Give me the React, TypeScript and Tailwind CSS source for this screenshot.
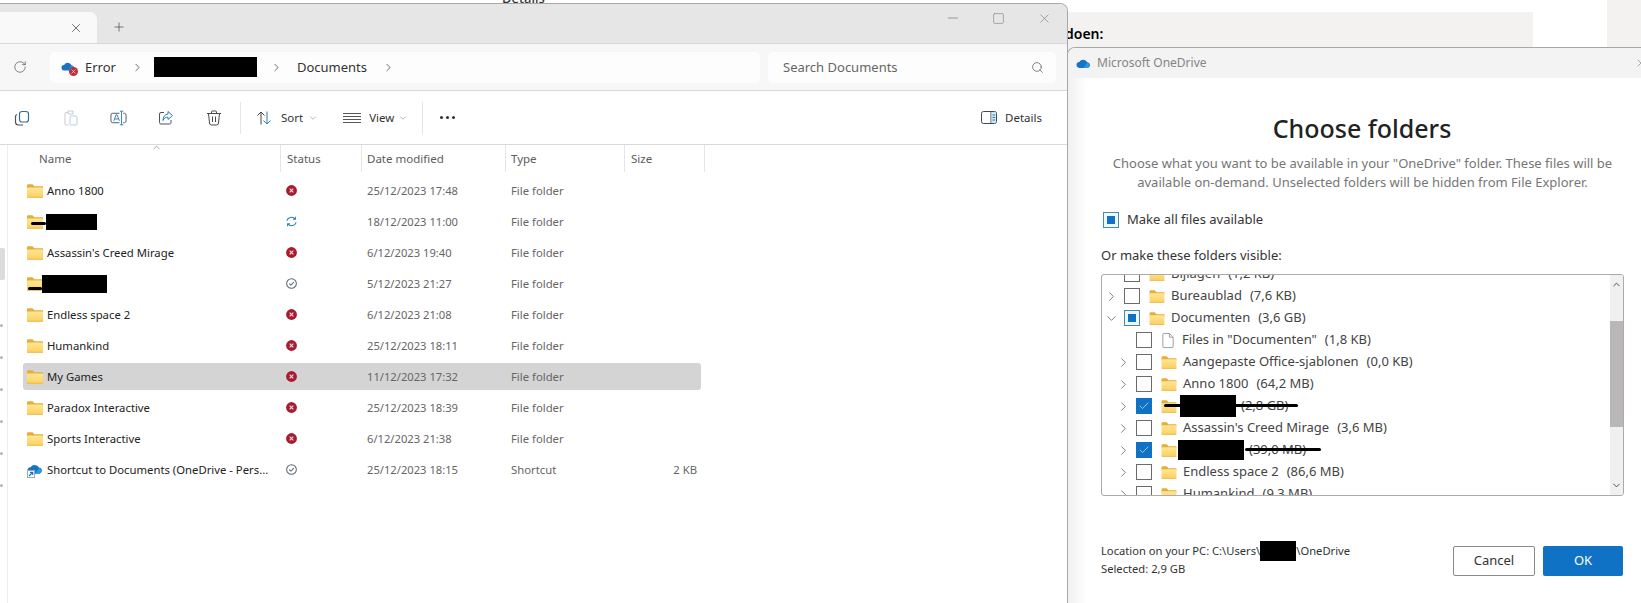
import { ChevronRight, ChevronDown, ChevronUp, Plus, X, Minus, Square, Search, RotateCw, Check } from "lucide-react";

const FONT = "font-['Noto_Sans',sans-serif]";

const files = [
  { name: "Anno 1800", status: "error", date: "25/12/2023 17:48", type: "File folder" },
  { name: "", hidden: 51, hiddenH: 16, hiddenGap: 3, lineLeft: 8, lineTop: 8, lineW: 15, status: "sync", date: "18/12/2023 11:00", type: "File folder" },
  { name: "Assassin's Creed Mirage", status: "error", date: "6/12/2023 19:40", type: "File folder" },
  { name: "", hidden: 65, hiddenH: 18, hiddenGap: -1, lineLeft: 5, lineTop: 12, lineW: 14, status: "ok", date: "5/12/2023 21:27", type: "File folder" },
  { name: "Endless space 2", status: "error", date: "6/12/2023 21:08", type: "File folder" },
  { name: "Humankind", status: "error", date: "25/12/2023 18:11", type: "File folder" },
  { name: "My Games", status: "error", date: "11/12/2023 17:32", type: "File folder", selected: true },
  { name: "Paradox Interactive", status: "error", date: "25/12/2023 18:39", type: "File folder" },
  { name: "Sports Interactive", status: "error", date: "6/12/2023 21:38", type: "File folder" },
  { name: "Shortcut to Documents (OneDrive - Pers...", status: "ok", date: "25/12/2023 18:15", type: "Shortcut", size: "2 KB", shortcut: true },
];

const tree = [
  { level: 1, name: "Bijlagen", size: "(1,2 KB)" },
  { level: 1, name: "Bureaublad", size: "(7,6 KB)", arrow: "right" },
  { level: 1, name: "Documenten", size: "(3,6 GB)", arrow: "down", state: "mixed" },
  { level: 2, name: 'Files in "Documenten"', size: "(1,8 KB)", file: true },
  { level: 2, name: "Aangepaste Office-sjablonen", size: "(0,0 KB)", arrow: "right" },
  { level: 2, name: "Anno 1800", size: "(64,2 MB)", arrow: "right" },
  { level: 2, redact: 56, redactGap: 3, redactH: 22, size: "(2,8 GB)", arrow: "right", state: "checked", strikeLeft: 62, strikeW: 134 },
  { level: 2, name: "Assassin's Creed Mirage", size: "(3,6 MB)", arrow: "right" },
  { level: 2, redact: 66, redactGap: 1, redactH: 20, size: "(39,0 MB)", arrow: "right", state: "checked", strikeLeft: 143, strikeW: 76 },
  { level: 2, name: "Endless space 2", size: "(86,6 MB)", arrow: "right" },
  { level: 2, name: "Humankind", size: "(9,3 MB)", arrow: "right" },
];

const FolderIcon = ({ className = "" }: { className?: string }) => (
  <svg viewBox="0 0 16 14" className={className}>
    <defs>
      <linearGradient id="folderBody" x1="0" y1="0" x2="0" y2="1">
        <stop offset="0" stopColor="#ffe694" />
        <stop offset="1" stopColor="#fbd05f" />
      </linearGradient>
    </defs>
    <path d="M0 1.500C0 .8.5.3 1.200.3h4.300l2 2H16V5H0z" fill="#e5ae3a" />
    <rect x="0" y="3.400" width="16" height="10.300" rx="1" fill="url(#folderBody)" />
    <rect x="0" y="12.800" width="16" height=".9" fill="#ebb84e" />
  </svg>
);

const ErrorIcon = () => (
  <svg viewBox="0 0 12 12" className="w-[11px] h-[11px]">
    <circle cx="6" cy="6" r="5.900" fill="#a81c2f" />
    <path d="M4 4l4 4M8 4l-4 4" stroke="#f5dfe2" strokeWidth="1.200" />
  </svg>
);

const SyncIcon = () => (
  <svg viewBox="0 0 12 12" fill="none" stroke="#2b82b8" strokeWidth="1.100" className="w-[11px] h-[11px]">
    <path d="M1 5.200A5 4.600 0 0 1 10 3.400M10.300.9v2.700H7.700" />
    <path d="M11 6.800A5 4.600 0 0 1 2 8.600M1.700 11.100V8.400h2.600" />
  </svg>
);

const OkIcon = () => (
  <svg viewBox="0 0 12 12" fill="none" stroke="#566670" className="w-[11px] h-[11px]">
    <circle cx="6" cy="6" r="5.300" strokeWidth="1.100" />
    <path d="M3.600 6.200l1.700 1.600 3.200-3.300" strokeWidth="1.100" />
  </svg>
);

const CloudIcon = ({ className = "" }: { className?: string }) => (
  <svg viewBox="0 0 20 13" className={className}>
    <path d="M5 13a4 4 0 0 1-.6-8A6 6 0 0 1 15 5.400 3.900 3.900 0 0 1 16 13z" fill="#1673c5" />
    <path d="M10 13l5-7a3.900 3.900 0 0 1 1 7z" fill="#2c9be0" />
  </svg>
);

const ShortcutCloud = () => (
  <div className="relative w-[16px] h-[14px] shrink-0">
    <CloudIcon className="w-[16px] h-[11px]" />
    <div className="absolute left-0 bottom-[-1px] w-[8px] h-[8px] bg-white border border-[#9ab] flex items-center justify-center">
      <svg viewBox="0 0 6 6" className="w-[6px] h-[6px]" fill="none" stroke="#1673c5" strokeWidth="1.200">
        <path d="M1 5l3.400-3.400M2 1.300h2.700V4" />
      </svg>
    </div>
  </div>
);

const CopyIcon = () => (
  <svg viewBox="0 0 16 16" fill="none" className="w-[16px] h-[16px]">
    <rect x="5.500" y="1.500" width="9" height="10.500" rx="2.500" stroke="#2f6f94" strokeWidth="1.200" />
    <path d="M3 4.500A2 2 0 0 0 1.500 6.500V12a3 3 0 0 0 3 3H9" stroke="#4a5560" strokeWidth="1.200" />
  </svg>
);

const PasteIcon = () => (
  <svg viewBox="0 0 16 16" fill="none" className="w-[16px] h-[16px]">
    <path d="M5 2.500H3a1 1 0 0 0-1 1v10.500a1 1 0 0 0 1 1h2.500M5 1h5v3H5z" stroke="#c9c9c9" />
    <rect x="7" y="6" width="7" height="9" rx="1" stroke="#b5d0e0" />
  </svg>
);

const RenameIcon = () => (
  <svg viewBox="0 0 18 16" fill="none" className="w-[17px] h-[16px]">
    <path d="M10 3H3a2 2 0 0 0-2 2v6a2 2 0 0 0 2 2h7M14 3h1.500a2 2 0 0 1 1.500 2v6a2 2 0 0 1-1.500 2H14" stroke="#4a5560" />
    <path d="M4 11l2.600-6.500h.8L10 11M5 9h4" stroke="#2a7fb0" />
    <path d="M10.500.8h3.500M12.250.8v14.400M10.500 15.200h3.500" stroke="#2a7fb0" />
  </svg>
);

const ShareIcon = () => (
  <svg viewBox="0 0 16 16" fill="none" className="w-[16px] h-[16px]">
    <path d="M6 2.500H3a1.500 1.500 0 0 0-1.500 1.500v8.500A1.500 1.500 0 0 0 3 14h8.500a1.500 1.500 0 0 0 1.500-1.500V10" stroke="#4a5560" />
    <path d="M10 1.500l4.500 4-4.500 4V7.200C7.500 7.200 6 8.200 5 10.500c0-4 2-6.300 5-6.500z" stroke="#2a7fb0" strokeLinejoin="round" />
  </svg>
);

const TrashIcon = () => (
  <svg viewBox="0 0 16 16" fill="none" stroke="#4a4a4a" className="w-[16px] h-[16px]">
    <path d="M1 3.500h14M5.500 3.500V2a1 1 0 0 1 1-1h3a1 1 0 0 1 1 1v1.500" />
    <path d="M2.500 3.500L3.500 13a2 2 0 0 0 2 2h5a2 2 0 0 0 2-2l1-9.500M6.500 6.500v5.500M9.500 6.500v5.500" />
  </svg>
);

const SortIcon = () => (
  <svg viewBox="0 0 16 16" fill="none" className="w-[16px] h-[16px]">
    <path d="M5 14.500V2M1.500 5.500L5 2l3.500 3.500" stroke="#444" />
    <path d="M11 1.500V14M7.500 10.500L11 14l3.500-3.500" stroke="#2a7fb0" />
  </svg>
);

const ViewIcon = () => (
  <svg viewBox="0 0 18 10" fill="none" stroke="#444" className="w-[18px] h-[10px]">
    <path d="M0 .5h18M0 3.500h18M0 6.500h18M0 9.500h18" strokeWidth=".9" />
  </svg>
);

const DetailsIcon = () => (
  <svg viewBox="0 0 16 13" fill="none" className="w-[16px] h-[13px]">
    <rect x=".5" y=".5" width="15" height="12" rx="2" stroke="#3d4a55" />
    <path d="M10 .5v12" stroke="#3d4a55" />
    <path d="M10.500 1h3.500a1.500 1.500 0 0 1 1 1v9a1.500 1.500 0 0 1-1 1h-3.500z" fill="#cfe6f5" />
    <path d="M11.500 4h2.500M11.500 6.500h2.500M11.500 9h2.500" stroke="#2a7fb0" />
  </svg>
);

const SmallChevron = () => <ChevronDown className="w-[10px] h-[10px] text-[#8a8a8a]" strokeWidth={1.5} />;

const Divider = () => <div className="w-px h-[32px] bg-[#e6e6e6]" />;

const TreeCheck = ({ state }: { state?: string }) => {
  if (state === "checked")
    return (
      <div className="w-[16px] h-[16px] shrink-0 bg-[#0f72c4] flex items-center justify-center">
        <Check className="w-[12px] h-[12px] text-white" strokeWidth={1.2} />
      </div>
    );
  if (state === "mixed")
    return (
      <div className="w-[16px] h-[16px] shrink-0 border border-[#4a8aa8] bg-[#eef7fb] flex items-center justify-center">
        <div className="w-[8px] h-[8px] bg-[#0f72c4]" />
      </div>
    );
  return <div className="w-[16px] h-[16px] shrink-0 border border-[#6b6b6b] bg-white" />;
};

export default function App() {
  return (
    <div className={`relative w-[1641px] h-[603px] overflow-hidden bg-white ${FONT}`}>
      {/* page behind the windows */}
      <div className="absolute left-[1067px] top-[12px] w-[466px] h-[60px] bg-[#f3f2f1]">
        <div className="text-[14px] font-semibold text-black leading-[20px] mt-[12px] ml-[-2px]">doen:</div>
      </div>
      <div className="absolute left-[1607px] top-0 w-[34px] h-[60px] bg-[#f3f2f1]" />
      <div className="absolute left-[502px] top-[-11px] text-[13px] leading-[18px] font-medium text-[#333]">Details</div>

      {/* explorer window */}
      <div className="absolute left-0 top-[3px] w-[1068px] h-[600px] bg-white border-r border-t border-[#a9a9a9] rounded-tr-[8px] overflow-hidden flex flex-col z-10">
        <div className="h-[39px] shrink-0 bg-[#e6e6e6] flex items-end relative">
          <div className="w-[97px] h-[31px] bg-[#f9f9f9] rounded-tr-[7px] flex items-center justify-end pr-[14px]">
            <X className="w-[14px] h-[14px] text-[#333]" strokeWidth={1.2} />
          </div>
          <Plus className="w-[14px] h-[14px] text-[#444] ml-[15px] mb-[9px]" strokeWidth={1.2} />
          <div className="ml-auto flex items-center pr-[15px] mb-[17px] text-[#858585]">
            <Minus className="w-[16px] h-[16px]" strokeWidth={1.2} />
            <Square className="w-[13px] h-[13px] ml-[31px]" strokeWidth={1.2} />
            <X className="w-[15px] h-[15px] ml-[32px]" strokeWidth={1.1} />
          </div>
        </div>
        <div className="h-[48px] shrink-0 bg-[#f7f7f7] border-t border-b border-[#d8d8d8] flex items-center">
          <RotateCw className="w-[14px] h-[14px] ml-[13px] text-[#555]" strokeWidth={1.2} />
          <div className="ml-[23px] w-[710px] h-[31px] bg-[#fdfdfd] rounded-[5px] flex items-center text-[13px] text-[#333]">
            <div className="relative w-[15px] h-[13px] ml-[11px]">
              <CloudIcon className="w-[14px] h-[10px]" />
              <div className="absolute right-[-2px] bottom-[-2px] w-[9px] h-[9px] rounded-full bg-[#b9303c] flex items-center justify-center">
                <X className="w-[7px] h-[7px] text-white" strokeWidth={2} />
              </div>
            </div>
            <span className="ml-[9px] pt-[1px]">Error</span>
            <ChevronRight className="w-[13px] h-[13px] ml-[15px] text-[#333]" strokeWidth={1.3} />
            <div className="w-[103px] h-[20px] bg-black ml-[10px]" />
            <ChevronRight className="w-[13px] h-[13px] ml-[13px] text-[#333]" strokeWidth={1.3} />
            <span className="ml-[14px] pt-[1px]">Documents</span>
            <ChevronRight className="w-[13px] h-[13px] ml-[15px] text-[#333]" strokeWidth={1.3} />
          </div>
          <div className="ml-[8px] w-[288px] h-[31px] bg-[#fdfdfd] rounded-[5px] flex items-center justify-between pl-[15px] pr-[12px] text-[13px] text-[#666]">
            <span className="pt-[1px]">Search Documents</span>
            <Search className="w-[13px] h-[13px] text-[#444]" strokeWidth={1.2} />
          </div>
        </div>
        <div className="h-[54px] shrink-0 border-b border-[#d9d9d9] flex items-center text-[11.5px] text-[#333]">
          <div className="w-[14px]" />
          <CopyIcon />
          <div className="w-[33px]" />
          <PasteIcon />
          <div className="w-[31px]" />
          <RenameIcon />
          <div className="w-[31px]" />
          <ShareIcon />
          <div className="w-[32px]" />
          <TrashIcon />
          <div className="w-[18px]" />
          <Divider />
          <div className="w-[15px]" />
          <SortIcon />
          <span className="ml-[9px]">Sort</span>
          <div className="ml-[5px]"><SmallChevron /></div>
          <div className="w-[25px]" />
          <ViewIcon />
          <span className="ml-[8px]">View</span>
          <div className="ml-[4px]"><SmallChevron /></div>
          <div className="w-[14px]" />
          <Divider />
          <div className="ml-[17px] flex gap-[3px]">
            <div className="w-[3px] h-[3px] rounded-full bg-[#333]" />
            <div className="w-[3px] h-[3px] rounded-full bg-[#333]" />
            <div className="w-[3px] h-[3px] rounded-full bg-[#333]" />
          </div>
          <div className="ml-auto mr-[25px] flex items-center gap-[8px]">
            <DetailsIcon />
            <span>Details</span>
          </div>
        </div>

        <div className="flex-1 flex min-h-0">
          {/* nav pane edge */}
          <div className="w-[8px] shrink-0 border-r border-[#eeeeee] relative flex flex-col items-start pt-[179px] gap-[29px]">
            <div className="absolute left-0 top-[103px] w-[5px] h-[32px] bg-[#dcdcdc] rounded-r-[2px]" />
            {[0, 1, 2, 3, 4, 5].map((i) => (
              <div key={i} className="w-[3px] h-[3px] rounded-full bg-[#b5b5b5]" />
            ))}
          </div>
          <div className="flex-1 relative">
            <ChevronUp className="absolute left-[143px] top-[-3px] w-[11px] h-[11px] text-[#777]" strokeWidth={1.5} />
            <div className="h-[27px] flex items-center text-[11.5px] text-[#5c5c5c]">
              <div className="w-[272px] pl-[31px]">Name</div>
              <div className="w-[81px] pl-[6px] h-full flex items-center border-l border-[#e5e5e5]">Status</div>
              <div className="w-[144px] pl-[5px] h-full flex items-center border-l border-[#e5e5e5]">Date modified</div>
              <div className="w-[119px] pl-[5px] h-full flex items-center border-l border-[#e5e5e5]">Type</div>
              <div className="w-[81px] pl-[6px] h-full flex items-center border-x border-[#e5e5e5]">Size</div>
            </div>
            <div className="pt-[3px] flex flex-col">
              {files.map((f, i) => (
                <div key={i} className="h-[31px] flex items-center text-[11.3px]">
                  <div className={`w-[678px] ml-[15px] h-[27px] rounded-[3px] flex items-center ${f.selected ? "bg-[#d4d4d4]" : ""}`}>
                    <div className="relative w-[249px] pl-[4px] flex items-center shrink-0">
                      {f.shortcut ? <ShortcutCloud /> : <FolderIcon className="w-[16px] h-[14px] shrink-0" />}
                      {f.hidden ? (
                        <>
                          <div className="bg-black" style={{ width: f.hidden, height: f.hiddenH, marginLeft: f.hiddenGap }} />
                          <div className="absolute h-[3px] bg-black rounded-full" style={{ left: f.lineLeft, top: f.lineTop, width: f.lineW }} />
                        </>
                      ) : (
                        <span className="ml-[4px] pt-[1px] whitespace-nowrap text-[#222]">{f.name}</span>
                      )}
                    </div>
                    <div className="w-[95px] flex justify-start pl-[14px] shrink-0">
                      {f.status === "error" ? <ErrorIcon /> : f.status === "sync" ? <SyncIcon /> : <OkIcon />}
                    </div>
                    <div className="w-[144px] shrink-0 pt-[1px] text-[#666] text-[11.2px]">{f.date}</div>
                    <div className="w-[120px] shrink-0 pt-[1px] text-[#666]">{f.type}</div>
                    <div className="flex-1 text-right pr-[4px] pt-[1px] text-[#666]">{f.size}</div>
                  </div>
                </div>
              ))}
            </div>
          </div>
        </div>
      </div>

      {/* onedrive dialog */}
      <div className="absolute left-[1067px] top-[47px] w-[574px] h-[556px] bg-white border-t border-l border-[#a8a8a8] rounded-tl-[8px] overflow-hidden flex flex-col z-20 text-[#333]">
        <div className="h-[30px] shrink-0 bg-[#f3f3f3] flex items-center pl-[8px] text-[12px] text-[#858585]">
          <CloudIcon className="w-[15px] h-[10px]" />
          <span className="ml-[6px]">Microsoft OneDrive</span>
          <X className="ml-auto mr-[-6px] w-[12px] h-[12px] text-[#777]" strokeWidth={1.2} />
        </div>
        <div className="flex-1 flex flex-col pl-[33px] pr-[17px] bg-gradient-to-r from-[#f1f1f1] via-white to-white bg-[length:40px_100%] bg-no-repeat">
          <h1 className="text-[25px] font-medium leading-[32px] text-[#222] text-center mt-[34px] ml-[-1px]">Choose folders</h1>
          <p className="text-[13px] leading-[19px] text-[#767676] text-center mt-[10px]">
            Choose what you want to be available in your "OneDrive" folder. These files will be
            <br />
            available on-demand. Unselected folders will be hidden from File Explorer.
          </p>
          <div className="flex items-center h-[20px] mt-[18px] ml-[2px] text-[13px]">
            <TreeCheck state="mixed" />
            <span className="ml-[8px]">Make all files available</span>
          </div>
          <div className="text-[13px] mt-[16px] leading-[18px]">Or make these folders visible:</div>
          <div className="mt-[10px] w-[523px] h-[222px] shrink-0 border border-[#ababab] rounded-[3px] overflow-hidden flex">
            <div className="flex-1 relative overflow-hidden text-[13px] text-[#444]">
              <div className="flex flex-col mt-[-12px]">
                {tree.map((t, i) => (
                  <div key={i} className={`relative h-[22px] flex items-center shrink-0 ${t.level === 1 ? "pl-[1px]" : "pl-[13px]"}`}>
                    <div className="w-[16px] flex justify-center shrink-0 mr-[5px]">
                      {t.arrow === "right" && <ChevronRight className="w-[15px] h-[15px] text-[#555]" strokeWidth={1.2} />}
                      {t.arrow === "down" && <ChevronDown className="w-[15px] h-[15px] text-[#555]" strokeWidth={1.2} />}
                    </div>
                    <TreeCheck state={t.state} />
                    {t.file ? (
                      <svg viewBox="0 0 12 16" fill="none" stroke="#9a9a9a" className="w-[12px] h-[15px] ml-[10px] mr-[2px]">
                        <path d="M.5 1.500a1 1 0 0 1 1-1h6l4 4v10a1 1 0 0 1-1 1h-9a1 1 0 0 1-1-1zM7.500.5v4h4" />
                      </svg>
                    ) : (
                      <FolderIcon className="w-[16px] h-[13px] ml-[9px]" />
                    )}
                    {t.redact ? (
                      <>
                        <div className="bg-black" style={{ width: t.redact, height: t.redactH, marginLeft: t.redactGap }} />
                        <span className="ml-[5px] whitespace-pre">{t.size}</span>
                        <div className="absolute top-[9px] h-[3px] bg-black rounded-full" style={{ left: t.strikeLeft, width: t.strikeW }} />
                      </>
                    ) : (
                      <span className="ml-[6px] whitespace-pre">
                        {t.name}
                        <span className="ml-[8px]">{t.size}</span>
                      </span>
                    )}
                  </div>
                ))}
              </div>
            </div>
            <div className="w-[13px] shrink-0 bg-[#f0f0f0] flex flex-col items-center relative">
              <ChevronUp className="absolute top-[4px] w-[11px] h-[11px] text-[#333]" strokeWidth={1.8} />
              <div className="absolute top-[46px] w-full h-[106px] bg-[#b9b8b6]" />
              <ChevronDown className="absolute bottom-[4px] w-[11px] h-[11px] text-[#333]" strokeWidth={1.8} />
            </div>
          </div>
          <div className="mt-[46px] flex justify-between items-start w-[522px]">
            <div className="text-[11.2px] leading-[18px] text-[#333]">
              <div className="flex items-center h-[18px]">
                Location on your PC: C:\Users\
                <div className="w-[36px] h-[20px] bg-black" />
                \OneDrive
              </div>
              <div>Selected: 2,9 GB</div>
            </div>
            <div className="flex gap-[8px] mt-[4px]">
              <button className="w-[82px] h-[30px] border border-[#8a8a8a] rounded-[2px] bg-white text-[13px] text-[#333]">Cancel</button>
              <button className="w-[80px] h-[30px] rounded-[2px] bg-[#0f72c4] text-[13px] text-white">OK</button>
            </div>
          </div>
        </div>
      </div>
    </div>
  );
}
